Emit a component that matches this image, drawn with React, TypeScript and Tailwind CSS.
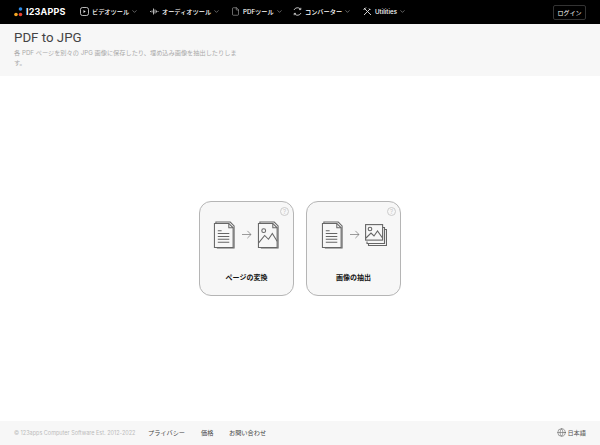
import { ChevronDown, File, Globe } from "lucide-react";

const font = "font-['Inter','Noto_Sans_CJK_JP',sans-serif]";

function NavItem({ icon, label, w }: any) {
  return (
    <div className={`flex items-center shrink-0 whitespace-nowrap ${w}`}>
      <span className="w-[12px] text-[#e5e5e5]">{icon}</span>
      <span className="text-[6.2px] font-medium text-white">{label}</span>
      <ChevronDown size={7} strokeWidth={1.5} className="ml-[2px] text-[#ddd]" />
    </div>
  );
}

function VideoIcon() {
  return (
    <svg width="9" height="9" viewBox="0 0 9 9" fill="none" stroke="currentColor" strokeWidth="0.8">
      <rect x="0.500" y="0.500" width="8" height="8" rx="2" />
      <path d="M3.500 3v3l2.200-1.500z" fill="currentColor" stroke="none" />
    </svg>
  );
}

function AudioIcon() {
  return (
    <svg width="9" height="9" viewBox="0 0 9 9" fill="none" stroke="currentColor" strokeWidth="0.8">
      <path d="M0.500 4v1M2 3.500v2M3.500 1.500v6M5 2.500v4M6.500 3.500v2M8 4v1" />
    </svg>
  );
}

function ConvertIcon() {
  return (
    <svg width="9" height="9" viewBox="0 0 9 9" fill="none" stroke="currentColor" strokeWidth="0.8">
      <path d="M1 3a3.800 3.800 0 0 1 6.500-.800M8 6a3.800 3.800 0 0 1-6.500.800" />
      <path d="M7.800 0.800v1.800H6M1.200 8.200V6.400H3" />
    </svg>
  );
}

function ToolsIcon() {
  return (
    <svg width="9" height="9" viewBox="0 0 9 9" fill="none" stroke="currentColor" strokeWidth="0.9">
      <path d="M1 8 7 2M1 1l7 7" />
      <path d="M6 1.500 7.500 3M0.500 3 3 0.500" />
    </svg>
  );
}

function DocIcon() {
  return (
    <svg width="23" height="29" viewBox="0 0 24 30" fill="none" stroke="#666" strokeWidth="1.1">
      <path d="M3 3V2h15l4 4v23H4" />
      <path d="M1.500 3.500h15l4.500 4.500v20.500H1.500z" fill="#f7f7f7" />
      <path d="M16.500 3.500V8H21" />
      <path d="M5 11h4M5 14h12M5 17h12M5 20h12M5 23h12" />
    </svg>
  );
}

function ImageIcon() {
  return (
    <svg width="23" height="29" viewBox="0 0 24 30" fill="none" stroke="#666" strokeWidth="1.1">
      <path d="M3 3V2h15l4 4v23H4" />
      <path d="M1.500 3.500h15l4.500 4.500v20.500H1.500z" fill="#f7f7f7" />
      <path d="M16.500 3.500V8H21" />
      <circle cx="7" cy="11" r="2" />
      <path d="M1.500 24 8 16l4 4 4-6 5 8" />
    </svg>
  );
}

function ImagesIcon() {
  return (
    <svg width="22" height="22" viewBox="0 0 22 22" fill="none" stroke="#666" strokeWidth="1.1">
      <path d="M3.500 19.500v2h18V5.500h-2" />
      <path d="M2 17.500v2h17.500V3.500H18" />
      <rect x="0.600" y="0.600" width="17" height="15.500" fill="#f7f7f7" />
      <circle cx="5" cy="5" r="1.800" />
      <path d="M1 14l5-5 3 3 3.500-5 5 7" />
    </svg>
  );
}

function Card({ right, label }: any) {
  return (
    <div className="relative w-[95px] h-[95px] rounded-[12px] border border-[#b5b5b5] bg-[#f7f7f7] flex flex-col items-center">
      <div className="absolute top-[5px] right-[4px] w-[9px] h-[9px] rounded-full border border-[#ccc] text-[6px] leading-[7px] text-center text-[#ccc]">?</div>
      <div className="mt-[18px] h-[30px] flex items-center gap-[5px]">
        <DocIcon />
        <svg width="11" height="9" viewBox="0 0 12 10" fill="none" stroke="#777" strokeWidth="0.8">
          <path d="M1 5h10M7 1l4 4-4 4" />
        </svg>
        {right}
      </div>
      <div className="mt-[23px] text-[7px] font-semibold text-[#111]">{label}</div>
    </div>
  );
}

export default function App() {
  return (
    <div className={`w-[600px] h-[445px] bg-white flex flex-col ${font}`}>
      <header className="h-[24px] bg-black flex items-center pl-[14px] pr-[14px]">
        <div className="flex items-center w-[66px] shrink-0">
          <svg width="10" height="10" viewBox="0 0 10 10">
            <circle cx="2" cy="7.500" r="1.800" fill="#f5a623" />
            <circle cx="6.500" cy="2" r="1.800" fill="#2e8be6" />
            <circle cx="6.500" cy="7.500" r="1.800" fill="#e8402f" />
          </svg>
          <span className="ml-[2px] text-[9px] font-bold text-white tracking-[0.2px]">I23APPS</span>
        </div>
        <NavItem w="w-[70px]" label="ビデオツール" icon={<VideoIcon />} />
        <NavItem w="w-[81px]" label="オーディオツール" icon={<AudioIcon />} />
        <NavItem w="w-[62px]" label="PDFツール" icon={<File size={9} strokeWidth={1.2} />} />
        <NavItem w="w-[70px]" label="コンバーター" icon={<ConvertIcon />} />
        <NavItem w="w-[60px]" label="Utilities" icon={<ToolsIcon />} />
        <button className="ml-auto w-[33px] h-[15px] rounded-[2px] border border-[#333] text-[6px] text-white">ログイン</button>
      </header>
      <section className="h-[52px] bg-[#f7f7f7] px-[14px] pt-[4px]">
        <h1 className="font-['Roboto',sans-serif] text-[13.300px] leading-[20px] text-[#444]">PDF to JPG</h1>
        <p className="w-[228px] text-[6.200px] leading-[10px] text-[#aaa]">各 PDF ページを別々の JPG 画像に保存したり、埋め込み画像を抽出したりします。</p>
      </section>
      <main className="flex-1 flex items-center justify-center gap-[12px] pb-[1px]">
        <Card right={<ImageIcon />} label="ページの変換" />
        <Card right={<ImagesIcon />} label="画像の抽出" />
      </main>
      <footer className="h-[24px] bg-[#f7f7f7] flex items-center pl-[14px] pr-[14px]">
        <span className="text-[5.500px] text-[#bbb] w-[134px] whitespace-nowrap">© 123apps Computer Software Est. 2012-2022</span>
        <span className="text-[6.200px] text-[#444] w-[53px]">プライバシー</span>
        <span className="text-[6.200px] text-[#444] w-[28px]">価格</span>
        <span className="text-[6.200px] text-[#444]">お問い合わせ</span>
        <div className="ml-auto flex items-center gap-[1px] text-[#555]">
          <Globe size={9} strokeWidth={1.4} />
          <span className="text-[6.200px]">日本語</span>
        </div>
      </footer>
    </div>
  );
}
